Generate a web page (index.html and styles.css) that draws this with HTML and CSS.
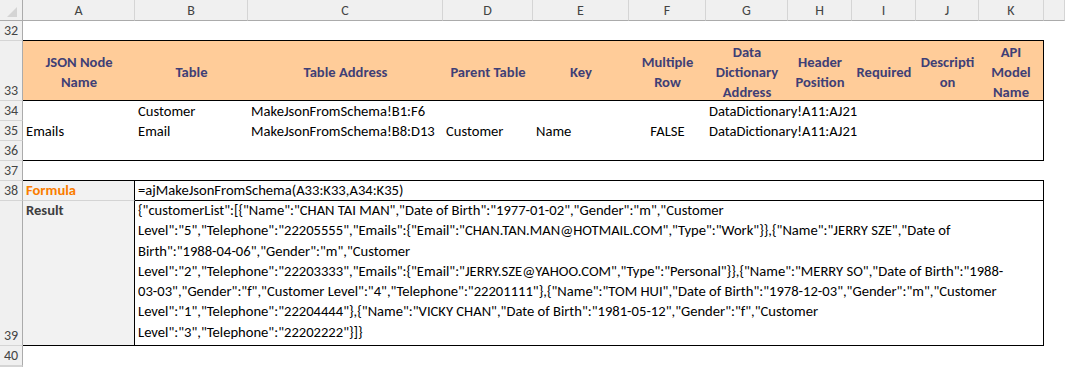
FILE: index.html
```html
<!DOCTYPE html>
<html>
<head>
<meta charset="utf-8">
<title>MakeJsonFromSchema</title>
<link rel="stylesheet" href="styles.css">
</head>
<body>
<div class="sheet">
	<div class="corner"><span class="tri"></span></div>
	<div class="ch cA">A</div>
	<div class="ch cB">B</div>
	<div class="ch cC">C</div>
	<div class="ch cD">D</div>
	<div class="ch cE">E</div>
	<div class="ch cF">F</div>
	<div class="ch cG">G</div>
	<div class="ch cH">H</div>
	<div class="ch cI">I</div>
	<div class="ch cJ">J</div>
	<div class="ch cK">K</div>
	<div class="ch cL"></div>

	<div class="rh r32">32</div>
	<div class="rh r33">33</div>
	<div class="rh r34">34</div>
	<div class="rh r35">35</div>
	<div class="rh r36">36</div>
	<div class="rh r37">37</div>
	<div class="rh r38">38</div>
	<div class="rh r39">39</div>
	<div class="rh r40">40</div>
	<div class="rh r41"></div>

	<!-- row 32: top edge of the schema table -->
	<div class="r32 cAK line-b"></div>

	<!-- row 33: headers -->
	<div class="hd r33 cA">JSON Node<br>Name</div>
	<div class="hd r33 cB">Table</div>
	<div class="hd r33 cC">Table Address</div>
	<div class="hd r33 cD">Parent Table</div>
	<div class="hd r33 cE">Key</div>
	<div class="hd r33 cF">Multiple<br>Row</div>
	<div class="hd r33 cG">Data<br>Dictionary<br>Address</div>
	<div class="hd r33 cH">Header<br>Position</div>
	<div class="hd r33 cI">Required</div>
	<div class="hd r33 cJ">Descripti<br>on</div>
	<div class="hd r33 cK last">API<br>Model<br>Name</div>

	<!-- rows 34-36: schema rows -->
	<div class="frame"></div>
	<div class="cell r34 cB">Customer</div>
	<div class="cell r34 cC">MakeJsonFromSchema!B1:F6</div>
	<div class="cell r34 cG">DataDictionary!A11:AJ21</div>

	<div class="cell r35 cA">Emails</div>
	<div class="cell r35 cB">Email</div>
	<div class="cell r35 cC">MakeJsonFromSchema!B8:D13</div>
	<div class="cell r35 cD">Customer</div>
	<div class="cell r35 cE">Name</div>
	<div class="cell r35 cF bool">FALSE</div>
	<div class="cell r35 cG">DataDictionary!A11:AJ21</div>

	<!-- row 37: top edge of the formula box -->
	<div class="r37 cAK line-b"></div>

	<!-- rows 38-39: formula and result -->
	<div class="cell lbl calc r38 cA">Formula</div>
	<div class="cell box r38 cBK">=ajMakeJsonFromSchema(A33:K33,A34:K35)</div>
	<div class="cell lbl out r39 cA">Result</div>
	<div class="cell box result r39 cBK">{"customerList":[{"Name":"CHAN TAI MAN","Date of Birth":"1977-01-02","Gender":"m","Customer<br>Level":"5","Telephone":"22205555","Emails":{"Email":"CHAN.TAN.MAN@HOTMAIL.COM","Type":"Work"}},{"Name":"JERRY SZE","Date of<br>Birth":"1988-04-06","Gender":"m","Customer<br>Level":"2","Telephone":"22203333","Emails":{"Email":"JERRY.SZE@YAHOO.COM","Type":"Personal"}},{"Name":"MERRY SO","Date of Birth":"1988-<br>03-03","Gender":"f","Customer Level":"4","Telephone":"22201111"},{"Name":"TOM HUI","Date of Birth":"1978-12-03","Gender":"m","Customer<br>Level":"1","Telephone":"22204444"},{"Name":"VICKY CHAN","Date of Birth":"1981-05-12","Gender":"f","Customer<br>Level":"3","Telephone":"22202222"}]}</div>
</div>
</body>
</html>
```

FILE: styles.css
```css
*{margin:0; padding:0; box-sizing:border-box;}
body{font-family:Carlito, Lato, "Liberation Sans", sans-serif; font-size:14.6px; color:#000; background:#fff;}

.sheet{display:grid; width:1065px; height:367px; overflow:hidden;
	grid-template-columns:23px 112px 113px 195px 90px 96px 77px 82px 64px 64px 63px 65px 1fr;
	grid-template-rows:21px 20px 60px 20px 20px 20px 20px 20px 145px 20px 1fr;}

/* headers */
.corner{grid-row:1; grid-column:1; background:#f0f0f0; border-right:1px solid #ababab; border-bottom:1px solid #ababab; display:flex; align-items:flex-end; justify-content:flex-end; padding:0 5px 3px 0;}
.corner .tri{width:0; height:0; border-left:10px solid transparent; border-bottom:10px solid #d4d4d4;}
.ch{grid-row:1; background:#f0f0f0; border-right:1px solid #d5d5d5; border-bottom:1px solid #ababab; text-align:center; line-height:21px; font-size:14px; color:#444;}
.rh{grid-column:1; background:#f0f0f0; border-right:1px solid #ababab; border-bottom:1px solid #d5d5d5; display:flex; align-items:flex-end; justify-content:center; font-size:14px; line-height:19px; color:#444;}

/* rows */
.r32{grid-row:2;} .r33{grid-row:3;} .r34{grid-row:4;} .r35{grid-row:5;} .r36{grid-row:6;}
.r37{grid-row:7;} .r38{grid-row:8;} .r39{grid-row:9;} .r40{grid-row:10;} .r41{grid-row:11;}

/* columns */
.cA{grid-column:2;} .cB{grid-column:3;} .cC{grid-column:4;} .cD{grid-column:5;} .cE{grid-column:6;}
.cF{grid-column:7;} .cG{grid-column:8;} .cH{grid-column:9;} .cI{grid-column:10;} .cJ{grid-column:11;}
.cK{grid-column:12;} .cL{grid-column:13;}
.cAK{grid-column:2 / 13;}
.cBK{grid-column:3 / 13;}

.line-b{border-bottom:1px solid #000;}

.hd{background:#ffcc99; color:#3f3f76; font-weight:bold; border-bottom:1px solid #000; padding-top:2px; display:flex; align-items:center; justify-content:center; text-align:center; line-height:20px;}
.hd.last{border-right:1px solid #000;}

.frame{grid-row:4 / 7; grid-column:2 / 13; border-right:1px solid #000; border-bottom:1px solid #000;}

.cell{display:flex; align-items:flex-end; padding:0 3px; white-space:nowrap; line-height:19px;}
.cell.bool{justify-content:center;}

.lbl{background:#f2f2f2; border-right:1px solid #000; font-weight:bold;}
.calc{color:#fa7d00; border-bottom:1px solid #d4d4d4;}
.out{color:#3f3f3f; align-items:flex-start; border-bottom:1px solid #000;}
.box{border-right:1px solid #000; border-bottom:1px solid #000;}
.result{display:block; line-height:20.3px; margin-top:-1px;}
```
